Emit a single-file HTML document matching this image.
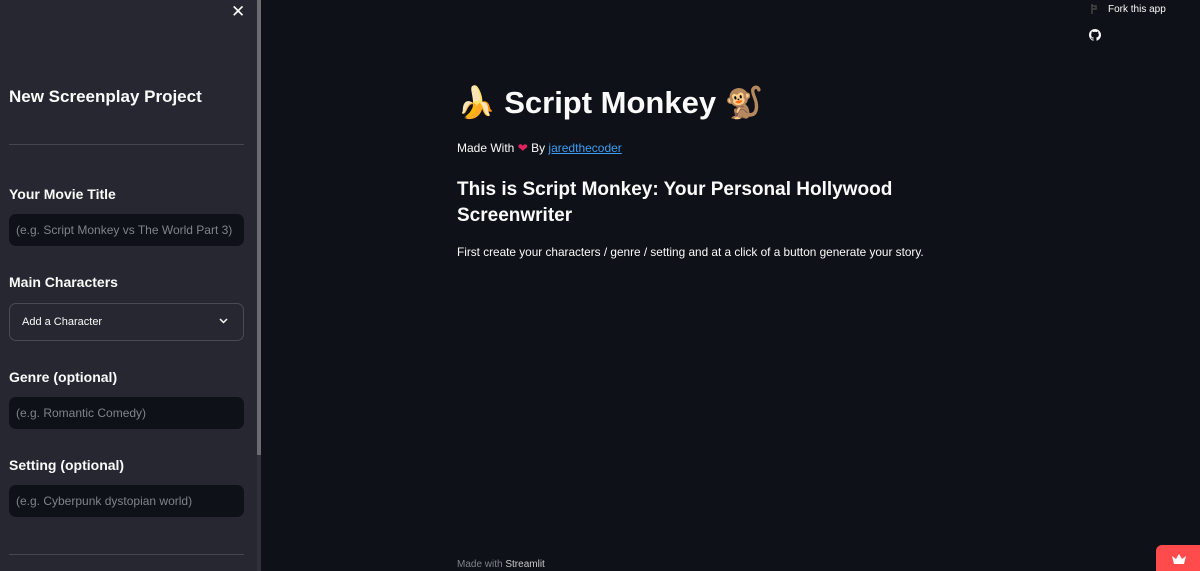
<!DOCTYPE html>
<html><head><meta charset="utf-8"><style>
*{box-sizing:border-box;margin:0;padding:0}
html,body{width:1200px;height:571px;overflow:hidden}
body{background:#0e1117;font-family:"Liberation Sans",sans-serif;color:#fafafa;position:relative}
.sb{position:absolute;left:0;top:0;width:257px;height:571px;background:#262730}
.scroll{position:absolute;left:257px;top:0;width:4px;height:455px;background:#6b6c72}
.scroll2{position:absolute;left:257px;top:455px;width:4px;height:116px;background:#2f3038}
.x{position:absolute;left:231px;top:2px;font-size:17px;color:#fafafa}
h2{position:absolute;left:9px;top:87px;font-size:17px;font-weight:bold}
.hr{position:absolute;left:9px;width:235px;height:1px;background:#45464e}
.lab{position:absolute;left:9px;font-size:14px;font-weight:bold}
.inp{position:absolute;left:9px;width:235px;height:32px;background:#0e1117;border-radius:7px;color:#80838a;font-size:12px;padding:9px 7px;white-space:nowrap;overflow:hidden}
.sel{position:absolute;left:9px;top:303px;width:235px;height:38px;border:1px solid #4a4b53;border-radius:7px;font-size:11px;padding:12px 12px;color:#fafafa}
.sel svg{position:absolute;right:15px;top:14px}
.main{position:absolute;left:457px}
.t1{top:84px;font-size:31px;font-weight:bold;white-space:nowrap}
.t2{top:141px;font-size:12px}
.t2 a{color:#3d9df3;text-decoration:underline}
.t3{top:177px;font-size:19px;font-weight:bold;line-height:26px;width:460px}
.t4{top:245px;font-size:11.8px;white-space:nowrap}
.foot{position:absolute;left:457px;top:559px;font-size:10px;color:#80838a}
.foot b{color:#c8c9cc;font-weight:normal}
.fork{position:absolute;left:1108px;top:4px;font-size:10px}
.crown{position:absolute;left:1156px;top:545px;width:44px;height:26px;background:#ff4b4b;border-radius:6px 0 0 0}
</style></head><body>
<div class="sb"></div><div class="scroll"></div><div class="scroll2"></div>
<div class="x">✕</div>
<h2>New Screenplay Project</h2>
<div class="hr" style="top:144px"></div>
<div class="lab" style="top:186px">Your Movie Title</div>
<div class="inp" style="top:214px">(e.g. Script Monkey vs The World Part 3)</div>
<div class="lab" style="top:274px">Main Characters</div>
<div class="sel">Add a Character<svg width="9" height="6" viewBox="0 0 9 6"><path d="M1 1l3.5 3.5L8 1" stroke="#fafafa" stroke-width="1.5" fill="none"/></svg></div>
<div class="lab" style="top:369px">Genre (optional)</div>
<div class="inp" style="top:397px">(e.g. Romantic Comedy)</div>
<div class="lab" style="top:457px">Setting (optional)</div>
<div class="inp" style="top:485px">(e.g. Cyberpunk dystopian world)</div>
<div class="hr" style="top:554px"></div>

<div class="main t1">🍌 Script Monkey 🐒</div>
<div class="main t2">Made With <span style="color:#e0245e">❤</span> By <a>jaredthecoder</a></div>
<div class="main t3">This is Script Monkey: Your Personal Hollywood Screenwriter</div>
<div class="main t4">First create your characters / genre / setting and at a click of a button generate your story.</div>
<div class="foot">Made with <b>Streamlit</b></div>
<div class="fork">Fork this app</div>
<svg style="position:absolute;left:1090px;top:3px" width="10" height="12" viewBox="0 0 10 12"><path d="M2 1v10M2 3h4v3h-4" stroke="#444" stroke-width="1.5" fill="none"/></svg>
<svg style="position:absolute;left:1089px;top:29px" width="12" height="12" viewBox="0 0 16 16"><path fill="#fafafa" d="M8 0C3.6 0 0 3.6 0 8c0 3.5 2.3 6.5 5.5 7.6.4.1.5-.2.5-.4v-1.4c-2.2.5-2.7-1-2.7-1-.4-.9-.9-1.2-.9-1.2-.7-.5.1-.5.1-.5.8.1 1.2.8 1.2.8.7 1.2 1.9.9 2.3.7.1-.5.3-.9.5-1.1-1.8-.2-3.6-.9-3.6-4 0-.9.3-1.6.8-2.1-.1-.2-.4-1 .1-2.1 0 0 .7-.2 2.2.8.6-.2 1.3-.3 2-.3s1.4.1 2 .3c1.5-1 2.2-.8 2.2-.8.4 1.1.2 1.9.1 2.1.5.6.8 1.3.8 2.1 0 3.1-1.9 3.7-3.6 3.9.3.3.5.8.5 1.5v2.2c0 .2.1.5.6.4C13.7 14.5 16 11.5 16 8c0-4.4-3.6-8-8-8z"/></svg>
<div class="crown"><svg style="position:absolute;left:15px;top:9px" width="16" height="10" viewBox="0 0 16 10"><path d="M1 2l4 3 3-5 3 5 4-3-2 8H3z" fill="#fff"/></svg></div>
</body></html>
